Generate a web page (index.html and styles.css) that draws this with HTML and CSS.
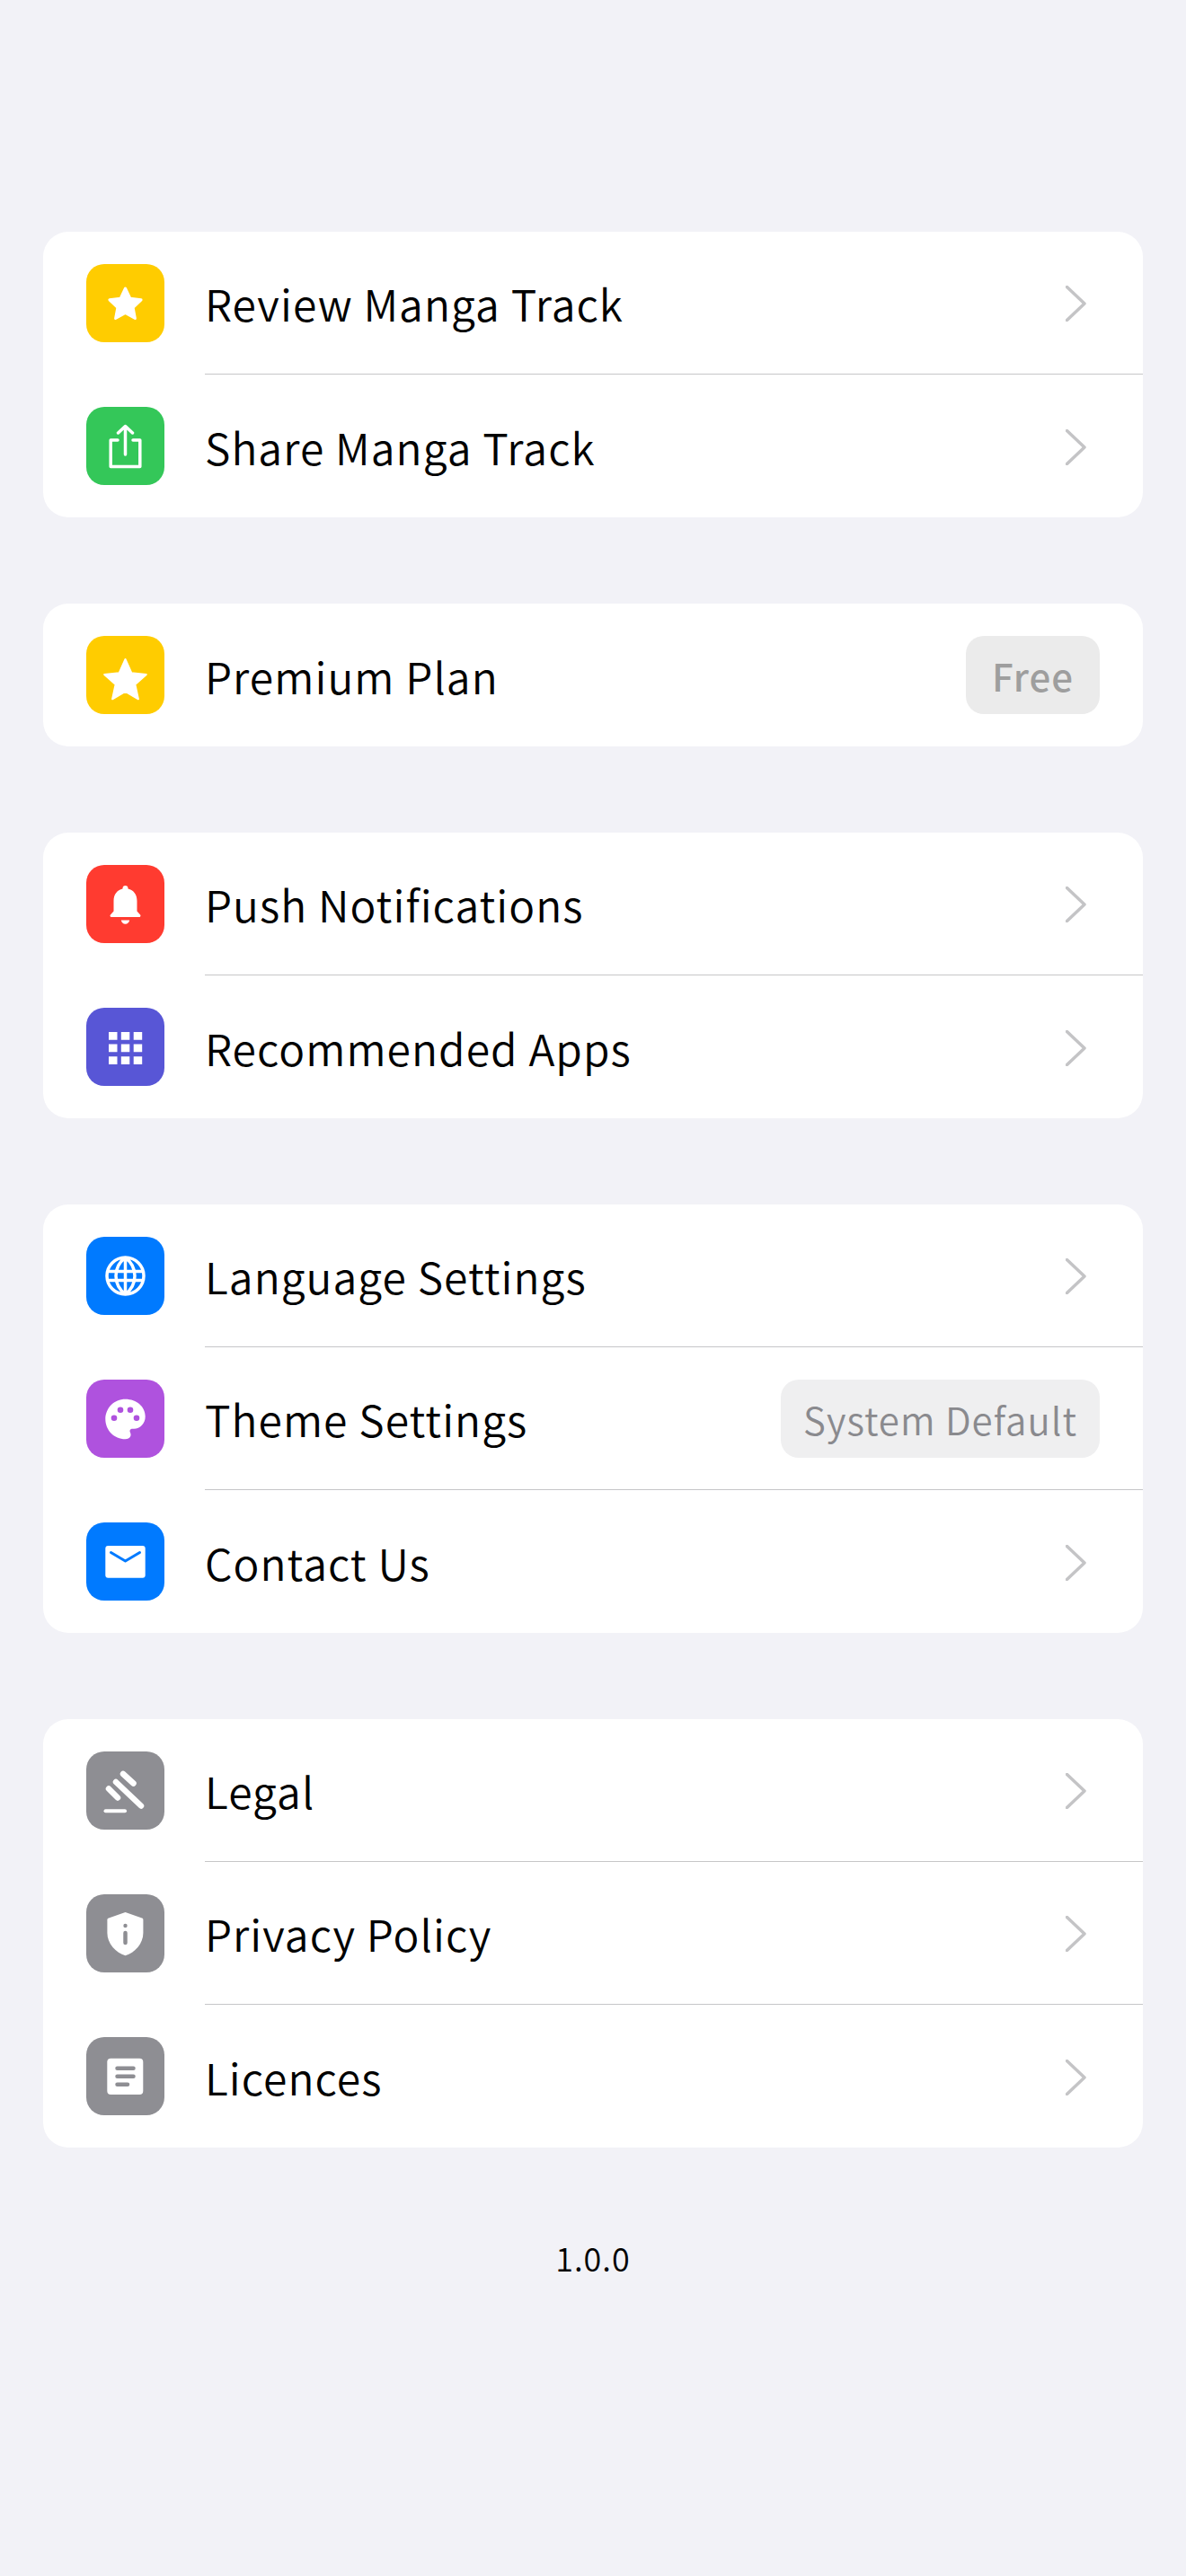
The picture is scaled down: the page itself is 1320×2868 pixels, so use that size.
FILE: index.html
```html
<!DOCTYPE html>
<html lang="en">
<head>
  <meta charset="UTF-8">
  <title>Settings</title>
  <link rel="stylesheet" href="styles.css">
</head>
<body>

<div class="page">

  <div class="card">
    <div class="row">
      <div class="icon yellow">
        <svg viewBox="0 0 87 87"><polygon class="solid" stroke-width="3" points="43.5,27 48.8,38.2 61.1,39.8 52.1,48.3 54.4,60.5 43.5,54.5 32.6,60.5 34.9,48.3 25.9,39.8 38.2,38.2"/></svg>
      </div>
      <div class="row-body"><span class="label">Review Manga Track</span><svg class="chevron" viewBox="0 0 24 40"><path d="M1.5 1.5 L21 20 L1.5 38.5"/></svg></div>
    </div>
    <div class="row">
      <div class="icon green">
        <svg viewBox="0 0 87 87"><path class="line" stroke-width="3.5" d="M35 37H27.2V66.500H59.800V37H52M43.500 53V22M35.500 29L43.500 21.500L51.500 29"/></svg>
      </div>
      <div class="row-body last"><span class="label">Share Manga Track</span><svg class="chevron" viewBox="0 0 24 40"><path d="M1.5 1.5 L21 20 L1.5 38.5"/></svg></div>
    </div>
  </div>

  <div class="card">
    <div class="row">
      <div class="icon yellow">
        <svg viewBox="0 0 87 87"><polygon class="solid" stroke-width="2" points="43.5,26 50.3,41.2 66.8,42.9 54.4,54.1 57.9,70.3 43.5,62 29.1,70.3 32.6,54.1 20.2,42.9 36.7,41.2"/></svg>
      </div>
      <div class="row-body last"><span class="label">Premium Plan</span><span class="chip chip-free">Free</span></div>
    </div>
  </div>

  <div class="card">
    <div class="row">
      <div class="icon red">
        <svg viewBox="0 0 87 87"><path class="fill" d="M43.5 23c1.8 0 3 1.3 3 3v.6c6.3 1.5 10 6.5 10 13.4v11.5l3.6 4c.8.9.2 2.5-1.1 2.5H28c-1.3 0-1.9-1.6-1.1-2.5l3.6-4V40c0-6.9 3.7-11.9 10-13.4V26c0-1.7 1.2-3 3-3zM38.8 61.5h9.4c-.5 2.6-2.3 4.2-4.7 4.2s-4.2-1.6-4.7-4.2z"/></svg>
      </div>
      <div class="row-body"><span class="label">Push Notifications</span><svg class="chevron" viewBox="0 0 24 40"><path d="M1.5 1.5 L21 20 L1.5 38.5"/></svg></div>
    </div>
    <div class="row">
      <div class="icon indigo">
        <svg viewBox="0 0 87 87"><path class="fill" d="M25 27h9.500v8.700h-9.500zM38.800 27h9.500v8.700h-9.500zM52.700 27h9.500v8.700h-9.500zM25 40.600h9.500v8.700h-9.500zM38.800 40.600h9.500v8.700h-9.500zM52.700 40.600h9.500v8.700h-9.500zM25 54.200h9.500v8.700h-9.500zM38.800 54.200h9.500v8.700h-9.500zM52.700 54.200h9.500v8.700h-9.500z"/></svg>
      </div>
      <div class="row-body last"><span class="label">Recommended Apps</span><svg class="chevron" viewBox="0 0 24 40"><path d="M1.5 1.5 L21 20 L1.5 38.5"/></svg></div>
    </div>
  </div>

  <div class="card">
    <div class="row">
      <div class="icon blue">
        <svg viewBox="0 0 87 87"><path class="line" stroke-width="3.500" d="M43.500 23a20.500 20.500 0 1 0 0 41a20.500 20.500 0 1 0 0-41zM43.500 23c-14 11-14 30 0 41c14-11 14-30 0-41zM43.500 23V64M23.500 38.500H63.500M23.500 48.500H63.500"/></svg>
      </div>
      <div class="row-body"><span class="label">Language Settings</span><svg class="chevron" viewBox="0 0 24 40"><path d="M1.5 1.5 L21 20 L1.5 38.5"/></svg></div>
    </div>
    <div class="row">
      <div class="icon purple">
        <svg viewBox="0 0 87 87">
          <path class="fill" d="M43.500 21.700C56 21.700 65.700 30 65.700 41C65.700 49 60 54.700 53 54.700H51.500C48.500 54.700 48 57 49 59C50.500 62 49 66.300 43.500 66.300C31 66.300 21.300 56.300 21.300 44C21.300 31.700 31 21.700 43.500 21.700Z"/>
          <circle class="hole-purple" cx="38" cy="33.700" r="3.300"/><circle class="hole-purple" cx="49" cy="33.700" r="3.300"/><circle class="hole-purple" cx="31" cy="42.700" r="3.300"/><circle class="hole-purple" cx="56" cy="42.700" r="3.300"/>
        </svg>
      </div>
      <div class="row-body"><span class="label">Theme Settings</span><span class="chip chip-system">System Default</span></div>
    </div>
    <div class="row">
      <div class="icon blue">
        <svg viewBox="0 0 87 87"><rect class="fill" x="21.300" y="26" width="44.400" height="35.700" rx="3"/><path class="mail-flap" d="M27.500 33.500L43.500 43L59.500 33.500"/></svg>
      </div>
      <div class="row-body last"><span class="label">Contact Us</span><svg class="chevron" viewBox="0 0 24 40"><path d="M1.5 1.5 L21 20 L1.5 38.5"/></svg></div>
    </div>
  </div>

  <div class="card">
    <div class="row">
      <div class="icon gray">
        <svg viewBox="0 0 87 87">
          <path class="line" stroke-width="6.500" d="M41 25L52.500 35.500M25 41.500L35 51.500M33 34L61 60.500"/>
          <path class="line" stroke-width="4" d="M21.500 66.300H43"/>
        </svg>
      </div>
      <div class="row-body"><span class="label">Legal</span><svg class="chevron" viewBox="0 0 24 40"><path d="M1.5 1.5 L21 20 L1.5 38.5"/></svg></div>
    </div>
    <div class="row">
      <div class="icon gray">
        <svg viewBox="0 0 87 87">
          <path class="fill" d="M43.500 20L62 26.500C63 26.900 63.400 27.500 63.400 28.500V43C63.400 55 54 65 43.500 68.300C33 65 23.400 55 23.400 43V28.500C23.400 27.500 24 26.900 25 26.500Z"/>
          <circle class="hole-gray" cx="43.500" cy="35" r="2.200"/><path class="info-bar" d="M43.500 43V54"/>
        </svg>
      </div>
      <div class="row-body"><span class="label">Privacy Policy</span><svg class="chevron" viewBox="0 0 24 40"><path d="M1.5 1.5 L21 20 L1.5 38.5"/></svg></div>
    </div>
    <div class="row">
      <div class="icon gray">
        <svg viewBox="0 0 87 87">
          <rect class="fill" x="23.300" y="23.700" width="40" height="40.300" rx="4"/>
          <path class="doc-lines" d="M34.500 34.700H52.500M34.500 43.700H52.500M34.500 52.700H46"/>
        </svg>
      </div>
      <div class="row-body last"><span class="label">Licences</span><svg class="chevron" viewBox="0 0 24 40"><path d="M1.5 1.5 L21 20 L1.5 38.5"/></svg></div>
    </div>
  </div>

  <div class="version">1.0.0</div>
</div>

</body>
</html>
```

FILE: styles.css
```css
body {
  margin: 0;
  background-color: #f2f2f7;
  font-family: "Noto Sans CJK JP", "Noto Sans", sans-serif;
  font-weight: 350;
  color: #000;
}

.page {
  padding: 258px 48px 0;
}

.card {
  background: white;
  border-radius: 28px;
  margin-bottom: 96px;
  overflow: hidden;
}

.row {
  display: flex;
  align-items: center;
  height: 159px;
  padding-left: 48px;
}

.row-body {
  flex: 1;
  height: 100%;
  box-sizing: border-box;
  margin-left: 45px;
  padding-right: 48px;
  display: flex;
  align-items: center;
  justify-content: space-between;
  border-bottom: 1px solid #c6c6c8;
}

.row-body.last {
  border-bottom: none;
}

.label {
  font-size: 48px;
  letter-spacing: 1.05px;
}

.icon {
  width: 87px;
  height: 87px;
  flex-shrink: 0;
  border-radius: 20px;
}

.icon svg {
  display: block;
  width: 87px;
  height: 87px;
}

.yellow { background: #ffcc00; }
.green { background: #34c759; }
.red { background: #ff3b30; }
.indigo { background: #5856d6; }
.blue { background: #007aff; }
.purple { background: #af52de; }
.gray { background: #8e8e93; }

.fill { fill: white; }

.solid {
  fill: white;
  stroke: white;
  stroke-linejoin: round;
}

.line {
  fill: none;
  stroke: white;
  stroke-linecap: round;
  stroke-linejoin: round;
}

.hole-purple { fill: #af52de; }
.hole-gray { fill: #8e8e93; }

.mail-flap {
  fill: none;
  stroke: #007aff;
  stroke-width: 3;
  stroke-linecap: round;
  stroke-linejoin: round;
}

.info-bar,
.doc-lines {
  fill: none;
  stroke: #8e8e93;
  stroke-width: 4.500;
  stroke-linecap: round;
}

.chevron {
  width: 24px;
  height: 40px;
  margin-right: 14px;
  margin-top: 2px;
  flex-shrink: 0;
}

.chevron path {
  fill: none;
  stroke: #c4c4c6;
  stroke-width: 3.500;
  stroke-linecap: round;
  stroke-linejoin: round;
}

.chip {
  height: 87px;
  box-sizing: border-box;
  display: flex;
  align-items: center;
  border-radius: 20px;
  font-size: 42px;
  letter-spacing: 1px;
}

.chip-free {
  background: #ebebeb;
  color: #9e9e9e;
  padding: 0 29px;
  font-weight: 500;
}

.chip-system {
  background: #efeff0;
  color: #8a8a8e;
  padding: 0 25px;
}

.version {
  margin-top: 96px;
  text-align: center;
  font-size: 36px;
  letter-spacing: 1px;
}
```
